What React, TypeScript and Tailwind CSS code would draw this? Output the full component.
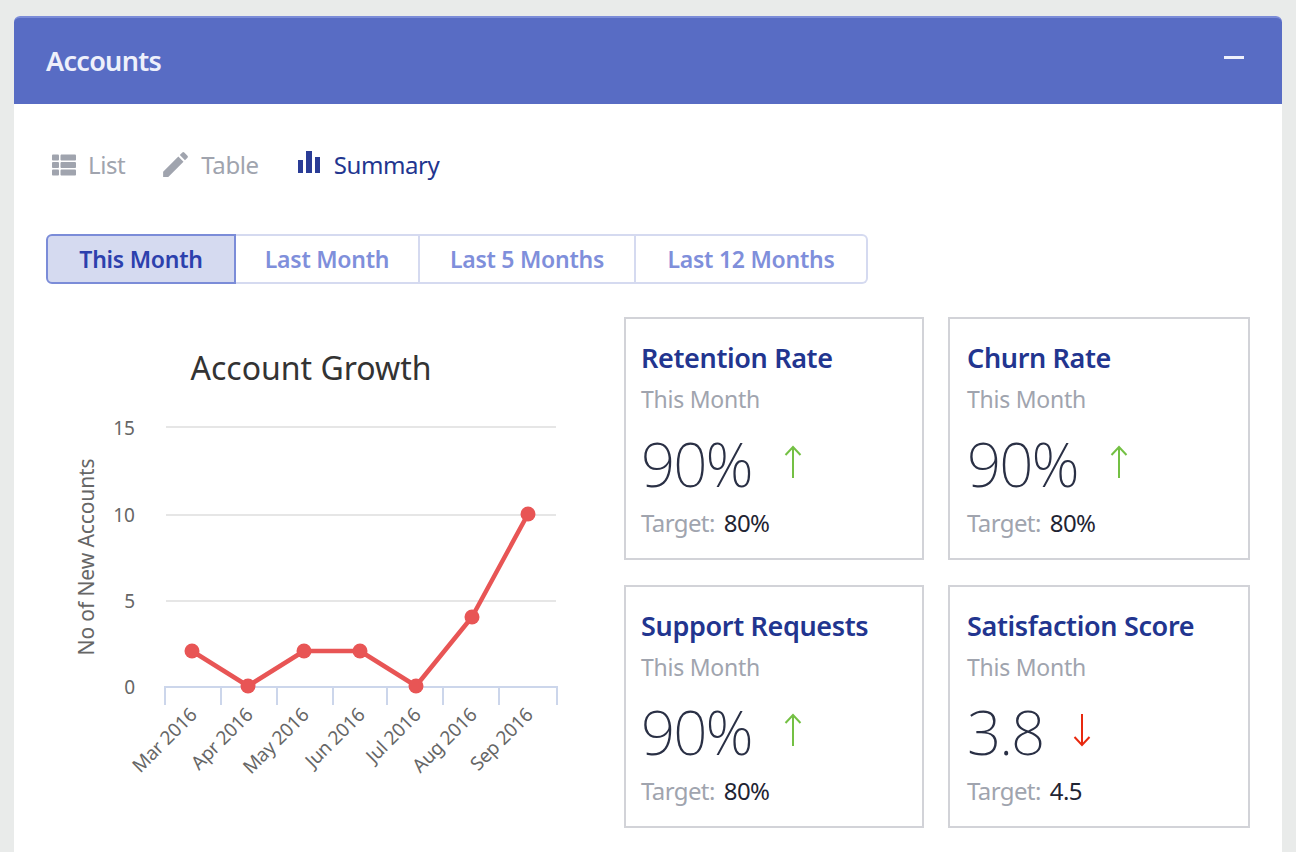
import { FaThList } from 'react-icons/fa';
import { MdEdit } from 'react-icons/md';

const FONT = "font-['Noto_Sans','Liberation_Sans',sans-serif]";

const points = [
  [192, 651],
  [248, 686],
  [304, 651],
  [360, 651],
  [416, 686],
  [472, 617],
  [528, 514],
];

const months = [
  ['Mar 2016', 198],
  ['Apr 2016', 254],
  ['May 2016', 310],
  ['Jun 2016', 366],
  ['Jul 2016', 422],
  ['Aug 2016', 478],
  ['Sep 2016', 534],
] as const;

function ArrowUp() {
  return (
    <svg width="20" height="34" viewBox="0 0 20 34" fill="none" stroke="#74c044" strokeWidth="2">
      <path d="M10 33V2M2.5 10L10 2l7.5 8" />
    </svg>
  );
}

function ArrowDown() {
  return (
    <svg width="20" height="34" viewBox="0 0 20 34" fill="none" stroke="#e8290f" strokeWidth="2">
      <path d="M10 1v31M2.5 24l7.5 8 7.5-8" />
    </svg>
  );
}

function StatCard({ title, value, target, down, right }: { title: string; value: string; target: string; down?: boolean; right?: boolean }) {
  return (
    <div className={`h-[243px] border-2 border-[#d2d3d8] pt-[21px] ${right ? 'pl-[17px]' : 'pl-[15px]'}`}>
      <div className="text-[27px] leading-[36px] font-semibold tracking-[-0.35px] text-[#22358f]">{title}</div>
      <div className="mt-[7px] text-[23px] leading-[32px] tracking-[-0.25px] text-[#a0a4ae]">This Month</div>
      <div className="mt-[17px] flex h-[64px] items-center">
        <span className="text-[60px] leading-none font-extralight tracking-[-2px] text-[#2a3045]">{value}</span>
        <span className={`-mt-[4px] flex ${down ? 'ml-[29px]' : 'ml-[32px]'}`}>{down ? <ArrowDown /> : <ArrowUp />}</span>
      </div>
      <div className="mt-[11px] flex text-[24px] leading-[32px] tracking-[-0.6px]">
        <span className="text-[#a0a4ae]">Target:</span>
        <span className="ml-[9px] text-[#1f2433]">{target}</span>
      </div>
    </div>
  );
}

function GrowthChart() {
  return (
    <svg width="554" height="511" viewBox="46 317 554 511" className="shrink-0">
      <text x="311" y="380" textAnchor="middle" fontSize="32" fill="#333333">Account Growth</text>
      {[427, 515, 601].map(y => (
        <line key={y} x1="166" x2="556" y1={y} y2={y} stroke="#e6e6e6" strokeWidth="2" />
      ))}
      {[['15', 435], ['10', 522], ['5', 608], ['0', 694]].map(([label, y]) => (
        <text key={label} x="135" y={y} textAnchor="end" fontSize="19" fill="#666666">{label}</text>
      ))}
      <text transform="translate(94 557) rotate(-90)" textAnchor="middle" fontSize="21" letterSpacing="-0.1" fill="#666666">
        No of New Accounts
      </text>
      <line x1="164" x2="558" y1="687" y2="687" stroke="#ccd6eb" strokeWidth="2" />
      {[165, 221, 277, 333, 387, 443, 499, 557].map(x => (
        <line key={x} x1={x} x2={x} y1="687" y2="705" stroke="#ccd6eb" strokeWidth="2" />
      ))}
      {months.map(([label, x]) => (
        <text
          key={label}
          transform={`translate(${x} 716) rotate(-45)`}
          textAnchor="end"
          fontSize="19"
          letterSpacing="-0.3"
          fill="#666666"
        >
          {label}
        </text>
      ))}
      <polyline points={points.map(p => p.join(',')).join(' ')} fill="none" stroke="#e85555" strokeWidth="4.5" strokeLinejoin="round" />
      {points.map(([x, y]) => (
        <circle key={x} cx={x} cy={y} r="7.5" fill="#e85555" />
      ))}
    </svg>
  );
}

export default function App() {
  return (
    <div className={`h-[852px] overflow-hidden bg-[#e9ebea] px-[14px] pt-[16px] ${FONT}`}>
      <div className="h-full rounded-t-[6px] bg-white">
        {/* header */}
        <div className="flex h-[88px] items-center justify-between rounded-t-[6px] border-t-2 border-[#7b8cd8] bg-[#586cc4] pl-[32px] pr-[38px]">
          <span className="mt-[1px] text-[27px] font-semibold tracking-[-0.7px] text-[#eef0fb]">Accounts</span>
          <span className="-mt-[8px] h-[3px] w-[20px] bg-[#eef0fb]" />
        </div>

        <div className="px-[32px]">
          {/* view switcher */}
          <div className="flex h-[62px] items-center pt-[59px] text-[24px] tracking-[-0.4px]">
            <div className="ml-[6px] flex items-center text-[#a0a4ae]">
              <FaThList className="h-[24px] w-[24px]" />
              <span className="ml-[12px]">List</span>
            </div>
            <div className="ml-[38px] flex items-center text-[#a0a4ae]">
              <MdEdit className="h-[33px] w-[33px] -ml-[4px] -mr-[3px]" />
              <span className="ml-[12px]">Table</span>
            </div>
            <div className="ml-[39px] flex items-center text-[#22358f]">
              <svg width="22" height="24" viewBox="0 0 22 24" fill="#2a3c96" className="-mt-[6px]">
                <rect x="0" y="10" width="5" height="13" />
                <rect x="8" y="1" width="6" height="22" />
                <rect x="17" y="7" width="5" height="16" />
              </svg>
              <span className="ml-[14px]">Summary</span>
            </div>
          </div>

          {/* period tabs */}
          <div className="mt-[68px] flex h-[50px] w-[822px] text-[23px] font-semibold tracking-[-0.25px]">
            <div className="flex w-[190px] items-center justify-center rounded-l-[6px] border-2 border-[#7b8cd8] bg-[#d5daf0] text-[#2c40ad]">This Month</div>
            <div className="flex w-[184px] items-center justify-center border-y-2 border-r-2 border-[#d5daf0] text-[#7f8fdb]">Last Month</div>
            <div className="flex w-[216px] items-center justify-center border-y-2 border-r-2 border-[#d5daf0] text-[#7f8fdb]">Last 5 Months</div>
            <div className="flex w-[232px] items-center justify-center rounded-r-[6px] border-y-2 border-r-2 border-[#d5daf0] text-[#7f8fdb]">Last 12 Months</div>
          </div>

          {/* chart + stats */}
          <div className="mt-[33px] flex justify-between">
            <GrowthChart />
            <div className="grid w-[626px] grid-cols-[300px_302px] gap-x-[24px] gap-y-[25px]">
              <StatCard title="Retention Rate" value="90%" target="80%" />
              <StatCard title="Churn Rate" value="90%" target="80%" right />
              <StatCard title="Support Requests" value="90%" target="80%" />
              <StatCard title="Satisfaction Score" value="3.8" target="4.5" down right />
            </div>
          </div>
        </div>
      </div>
    </div>
  );
}
